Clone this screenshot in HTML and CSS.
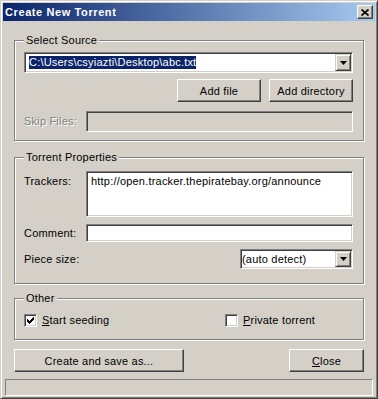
FILE: index.html
```html
<!DOCTYPE html>
<html lang="en">
<head>
  <meta charset="UTF-8">
  <title>Create New Torrent</title>
  <link rel="stylesheet" href="styles.css">
</head>
<body>

  <div class="window">
    <div class="titlebar">
      <span class="title">Create New Torrent</span>
      <span class="caption-btn">
        <svg width="8" height="7" viewBox="0 0 8 7"><path d="M0.5 0.5 L7.5 6.5 M7.5 0.5 L0.5 6.5" stroke="#000" stroke-width="1.7" fill="none"/></svg>
      </span>
    </div>

    <div class="group group-source">
      <div class="group-title">Select Source</div>
      <div class="combo combo-path sunken">
        <span class="combo-text"><span class="selected">C:\Users\csyiazti\Desktop\abc.txt</span></span>
        <span class="combo-btn"><svg width="7" height="4" viewBox="0 0 7 4"><path d="M0 0 H7 L3.5 4 Z" fill="#000"/></svg></span>
      </div>
      <div class="btn-row">
        <button class="btn btn-add">Add file</button>
        <button class="btn btn-add">Add directory</button>
      </div>
      <div class="field-row skip-row">
        <span class="field-label disabled">Skip Files:</span>
        <div class="edit sunken edit-disabled"></div>
      </div>
    </div>

    <div class="group group-props">
      <div class="group-title">Torrent Properties</div>
      <div class="field-row trackers-row">
        <span class="field-label">Trackers:</span>
        <div class="edit sunken edit-area">http://open.tracker.thepiratebay.org/announce</div>
      </div>
      <div class="field-row comment-row">
        <span class="field-label">Comment:</span>
        <div class="edit sunken edit-comment"></div>
      </div>
      <div class="field-row piece-row">
        <span class="field-label">Piece size:</span>
        <div class="combo combo-piece sunken">
          <span class="combo-text">(auto detect)</span>
          <span class="combo-btn"><svg width="7" height="4" viewBox="0 0 7 4"><path d="M0 0 H7 L3.5 4 Z" fill="#000"/></svg></span>
        </div>
      </div>
    </div>

    <div class="group group-other">
      <div class="group-title">Other</div>
      <div class="check-row">
        <label class="check-item check-seed">
          <span class="checkbox sunken"><svg width="7" height="7" viewBox="0 0 7 7"><path d="M0 2h1v1h1v1h1v-1h1v-1h1v-1h1v-1h1v3h-1v1h-1v1h-1v1h-1v1h-1v-1h-1v-1h-1z" fill="#000"/></svg></span>
          <span><u>S</u>tart seeding</span>
        </label>
        <label class="check-item">
          <span class="checkbox sunken"></span>
          <span><u>P</u>rivate torrent</span>
        </label>
      </div>
    </div>

    <div class="action-row">
      <button class="btn btn-create">Create and save as...</button>
      <button class="btn btn-close"><u>C</u>lose</button>
    </div>

    <div class="statusbar"></div>
  </div>

</body>
</html>
```

FILE: styles.css
```css
* {
  margin: 0;
  padding: 0;
  box-sizing: border-box;
}

body {
  font-family: 'Liberation Sans', Arial, sans-serif;
  font-size: 11px;
  letter-spacing: 0.2px;
  color: #000;
  background-color: #d4d0c8;
}

.window {
  width: 378px;
  height: 399px;
  background-color: #d4d0c8;
  border: 1px solid;
  border-color: #d4d0c8 #404040 #404040 #d4d0c8;
  box-shadow: inset 1px 1px #fff, inset -1px -1px #808080;
  padding: 2px;
  overflow: hidden;
}

.titlebar {
  height: 18px;
  display: flex;
  align-items: center;
  justify-content: space-between;
  padding: 0 2px;
  background: linear-gradient(to right, #0a246a, #a6caf0);
}

.title {
  color: #fff;
  font-weight: bold;
  letter-spacing: 0.6px;
  line-height: 18px;
}

.caption-btn {
  width: 16px;
  height: 14px;
  display: flex;
  align-items: center;
  justify-content: center;
  background-color: #d4d0c8;
  border: 1px solid;
  border-color: #fff #404040 #404040 #fff;
  box-shadow: inset -1px -1px #808080;
}

/* classic 3d edges */
.sunken {
  border: 1px solid;
  border-color: #808080 #fff #fff #808080;
  box-shadow: inset 1px 1px #404040, inset -1px -1px #d4d0c8;
}

.btn {
  height: 23px;
  font-family: inherit;
  font-size: 11px;
  letter-spacing: 0.2px;
  color: #000;
  background-color: #d4d0c8;
  border: 1px solid;
  border-color: #fff #404040 #404040 #fff;
  box-shadow: inset -1px -1px #808080;
  cursor: pointer;
}

/* group boxes */
.group {
  margin: 0 11px;
  border: 1px solid #808080;
  box-shadow: 1px 1px 0 #fff, inset 1px 1px 0 #fff;
  padding: 0 10px 0 9px;
}

.group-title {
  display: table;
  margin-top: -7px;
  padding: 0 2px;
  line-height: 13px;
  background-color: #d4d0c8;
}

.group-source {
  margin-top: 19px;
  padding-bottom: 8px;
}

.group-props {
  margin-top: 16px;
  padding-bottom: 14px;
}

.group-other {
  margin-top: 14px;
  padding-bottom: 12px;
}

/* combo boxes */
.combo {
  display: flex;
  background-color: #fff;
  padding: 1px;
}

.combo-text {
  flex: 1;
  display: flex;
  align-items: center;
  white-space: nowrap;
  overflow: hidden;
}

.combo-path {
  margin-top: 5px;
  height: 21px;
}

.combo-path .combo-text {
  padding-left: 3px;
}

.selected {
  background-color: #0a246a;
  color: #fff;
  line-height: 13px;
}

.combo-btn {
  width: 16px;
  flex: none;
  display: flex;
  align-items: center;
  justify-content: center;
  background-color: #d4d0c8;
  border: 1px solid;
  border-color: #d4d0c8 #404040 #404040 #d4d0c8;
  box-shadow: inset 1px 1px #fff, inset -1px -1px #808080;
}

.combo-piece {
  width: 113px;
  height: 20px;
  margin-left: auto;
}

.combo-piece .combo-text {
  padding-left: 0;
}

.btn-row {
  display: flex;
  justify-content: flex-end;
  gap: 8px;
  margin-top: 6px;
}

.btn-add {
  width: 84px;
}

/* label + edit rows */
.field-row {
  display: flex;
  align-items: center;
}

.field-label {
  width: 62px;
  flex: none;
  line-height: 13px;
}

.field-label.disabled {
  color: #808080;
  text-shadow: 1px 1px 0 #fff;
}

.edit {
  flex: 1;
  height: 21px;
  background-color: #fff;
  padding: 3px 4px;
  line-height: 13px;
}

.edit-disabled {
  background-color: #d4d0c8;
}

.skip-row {
  margin-top: 9px;
}

.trackers-row {
  margin-top: 7px;
  align-items: flex-start;
}

.trackers-row .field-label {
  padding-top: 4px;
}

.edit-area {
  height: 46px;
}

.comment-row {
  margin-top: 7px;
}

.edit-comment {
  height: 18px;
}

.piece-row {
  margin-top: 7px;
}

/* checkboxes */
.check-row {
  display: flex;
  margin-top: 9px;
  height: 13px;
}

.check-item {
  display: flex;
  align-items: center;
  gap: 5px;
  line-height: 13px;
}

.check-seed {
  width: 201px;
}

.checkbox {
  width: 13px;
  height: 13px;
  display: flex;
  align-items: center;
  justify-content: center;
  background-color: #fff;
}

/* bottom */
.action-row {
  display: flex;
  justify-content: space-between;
  margin: 9px 11px 0;
}

.btn-create {
  width: 170px;
}

.btn-close {
  width: 75px;
}

.statusbar {
  height: 17px;
  margin: 7px 2px 0;
  border: 1px solid;
  border-color: #808080 #fff #fff #808080;
}
```
